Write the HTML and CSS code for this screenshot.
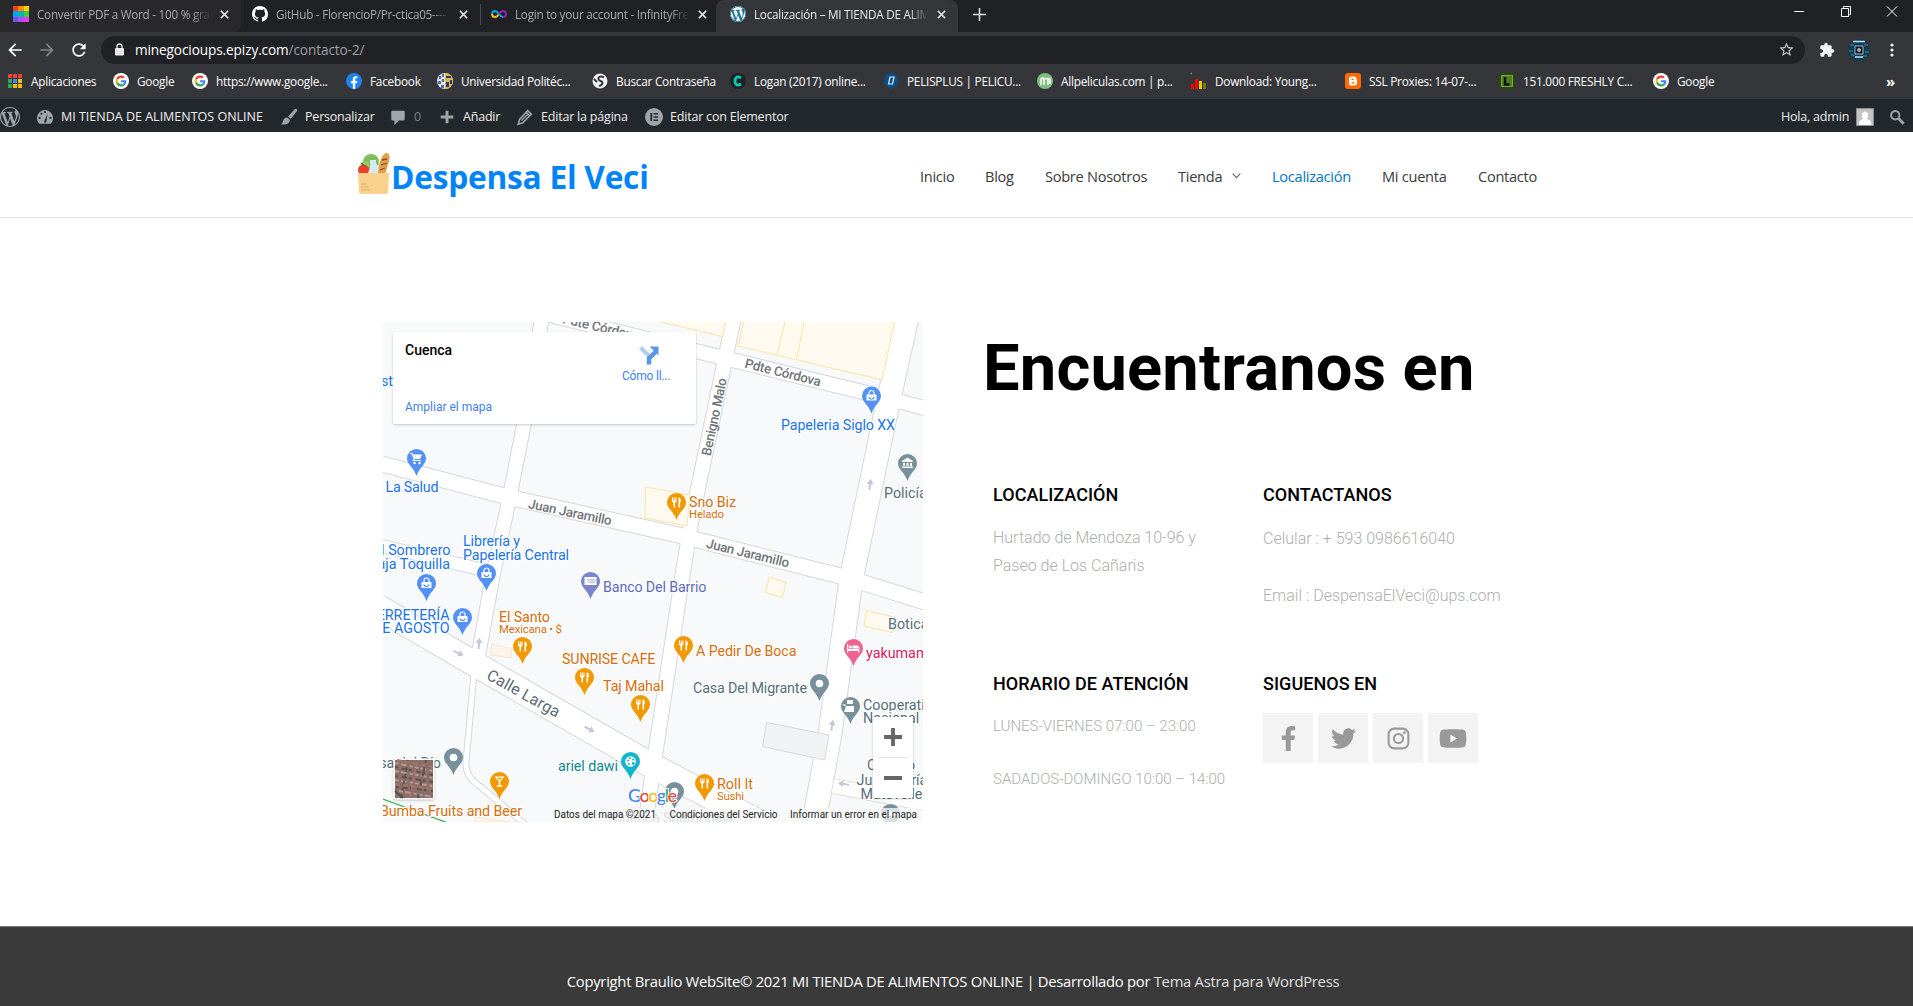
FILE: index.html
```html
<!DOCTYPE html>
<html lang="es">
<head>
<meta charset="utf-8">
<title>Localización – MI TIENDA DE ALIMENTOS ONLINE</title>
<link rel="stylesheet" href="styles.css">
</head>
<body>
<svg class="defs" width="0" height="0" aria-hidden="true">
  <symbol id="g" viewBox="-4 -4 56 56"><circle cx="24" cy="24" r="28" fill="#fff"/><g transform="translate(5 5) scale(.8)"><path fill="#ea4335" d="M24 9.5c3.54 0 6.71 1.22 9.21 3.6l6.85-6.85C35.9 2.38 30.47 0 24 0 14.62 0 6.51 5.38 2.56 13.22l7.98 6.19C12.43 13.72 17.74 9.5 24 9.5z"/><path fill="#4285f4" d="M46.98 24.55c0-1.57-.15-3.09-.38-4.55H24v9.02h12.94c-.58 2.96-2.26 5.48-4.78 7.18l7.73 6c4.51-4.18 7.09-10.36 7.09-17.65z"/><path fill="#fbbc05" d="M10.53 28.59c-.48-1.45-.76-2.99-.76-4.59s.27-3.14.76-4.59l-7.98-6.19C.92 16.46 0 20.12 0 24c0 3.88.92 7.54 2.56 10.78l7.97-6.19z"/><path fill="#34a853" d="M24 48c6.48 0 11.93-2.13 15.89-5.81l-7.73-6c-2.15 1.45-4.92 2.3-8.16 2.3-6.26 0-11.57-4.22-13.47-9.91l-7.98 6.19C6.51 42.62 14.62 48 24 48z"/></g></symbol>
  <symbol id="wp" viewBox="0 0 20 20"><path d="M20 10c0-5.51-4.49-10-10-10C4.48 0 0 4.49 0 10c0 5.52 4.48 10 10 10 5.51 0 10-4.48 10-10zM7.78 15.37L4.37 6.22c.55-.02 1.17-.08 1.17-.08.5-.06.44-1.13-.06-1.11 0 0-1.45.11-2.37.11-.18 0-.37 0-.58-.01C4.12 2.69 6.87 1.11 10 1.11c2.33 0 4.45.87 6.05 2.34-.68-.11-1.65.39-1.65 1.58 0 .74.45 1.36.9 2.1.35.61.55 1.36.55 2.46 0 1.49-1.4 5-1.4 5l-3.03-8.37c.54-.02.82-.17.82-.17.5-.05.44-1.25-.06-1.22 0 0-1.44.12-2.38.12-.87 0-2.33-.12-2.33-.12-.5-.03-.56 1.2-.06 1.22l.92.08 1.26 3.41zM17.41 10c.24-.64.74-1.87.43-4.25.7 1.29 1.05 2.71 1.05 4.25 0 3.29-1.73 6.24-4.4 7.78.97-2.59 1.94-5.2 2.92-7.78zM6.1 18.09C3.12 16.65 1.11 13.53 1.11 10c0-1.3.23-2.48.72-3.59C3.25 10.3 4.67 14.2 6.1 18.09zm4.03-6.63l2.58 6.98c-.86.29-1.76.45-2.71.45-.79 0-1.57-.11-2.29-.33.81-2.38 1.62-4.74 2.42-7.1z"/></symbol>
  <symbol id="x" viewBox="0 0 10 10"><path d="M1 1l8 8M9 1L1 9" stroke="currentColor" stroke-width="1.7" fill="none"/></symbol>
  <symbol id="arrow" viewBox="0 0 24 24"><path d="M20 11H7.83l5.59-5.59L12 4l-8 8 8 8 1.41-1.41L7.83 13H20v-2z"/></symbol>
</svg>

<div class="tabs">
  <div class="tab hover">
    <svg class="fav" viewBox="0 0 16 16"><path fill="#f53c1e" d="M0 0h5v5H0z"/><path fill="#fb8a00" d="M5 0h6v5H5z"/><path fill="#ffd000" d="M11 0h5v5h-5z"/><path fill="#00a6e8" d="M0 5h5v6H0z"/><path fill="#00b8b0" d="M5 5h6v6H5z"/><path fill="#3dc940" d="M11 5h5v6h-5z"/><path fill="#7a4df0" d="M0 11h5v5H0z"/><path fill="#b54df5" d="M5 11h6v5H5z"/><path fill="#e33ff0" d="M11 11h5v5h-5z"/></svg>
    <span class="tab-title">Convertir PDF a Word - 100 % gratis</span><svg class="close"><use href="#x"/></svg>
  </div>
  <div class="tab">
    <svg class="fav" viewBox="0 0 16 16"><path fill="#fff" d="M8 0C3.58 0 0 3.58 0 8c0 3.54 2.29 6.53 5.47 7.59.4.07.55-.17.55-.38 0-.19-.01-.82-.01-1.49-2.01.37-2.53-.49-2.69-.94-.09-.23-.48-.94-.82-1.13-.28-.15-.68-.52-.01-.53.63-.01 1.08.58 1.23.82.72 1.21 1.87.87 2.33.66.07-.52.28-.87.51-1.07-1.78-.2-3.64-.89-3.64-3.95 0-.87.31-1.59.82-2.15-.08-.2-.36-1.02.08-2.12 0 0 .67-.21 2.2.82.64-.18 1.32-.27 2-.27s1.36.09 2 .27c1.53-1.04 2.2-.82 2.2-.82.44 1.1.16 1.92.08 2.12.51.56.82 1.27.82 2.15 0 3.07-1.87 3.75-3.65 3.95.29.25.54.73.54 1.48 0 1.07-.01 1.93-.01 2.2 0 .21.15.46.55.38A8.01 8.01 0 0 0 16 8c0-4.42-3.58-8-8-8z"/></svg>
    <span class="tab-title">GitHub - FlorencioP/Pr-ctica05----</span><svg class="close"><use href="#x"/></svg>
  </div>
  <div class="tab sep">
    <svg class="fav" viewBox="0 0 16 16" fill="none" stroke-width="2"><path stroke="#f2c500" d="M8 8C6.500 10.500 5.500 11 4 11a3 3 0 0 1-3-3"/><path stroke="#00a8e8" d="M1 8a3 3 0 0 1 3-3c2 0 3 1.500 4 3s2 3 4 3"/><path stroke="#8e24aa" d="M8 8c1-1.500 2-3 4-3a3 3 0 0 1 0 6"/></svg>
    <span class="tab-title">Login to your account - InfinityFree</span><svg class="close"><use href="#x"/></svg>
  </div>
  <div class="tab active">
    <svg class="fav" viewBox="0 0 16 16"><circle cx="8" cy="8" r="8" fill="#fff"/><use href="#wp" fill="#21759b" width="16" height="16"/></svg>
    <span class="tab-title">Localización – MI TIENDA DE ALIMENTOS</span><svg class="close"><use href="#x"/></svg>
  </div>
  <svg class="plus" viewBox="0 0 13 13"><path d="M6.500 0v13M0 6.500h13" stroke="#dadce0" stroke-width="1.600"/></svg>
  <svg class="win" width="104" height="12" viewBox="0 0 104 12" fill="none" stroke="#fff"><path d="M0 6.500h10M47.500 3.500h7v8h-7zM49.500 3.500v-2h7v8h-2M93 1.500l10 10M103 1.500l-10 10"/></svg>
</div>

<div class="toolbar">
  <svg class="nav-i" fill="#fff"><use href="#arrow"/></svg>
  <svg class="nav-i flip" fill="#85868a"><use href="#arrow"/></svg>
  <svg class="nav-i" viewBox="0 0 24 24" fill="#fff"><path d="M17.650 6.350C16.200 4.900 14.210 4 12 4c-4.420 0-7.990 3.580-7.990 8s3.570 8 7.990 8c3.730 0 6.840-2.550 7.730-6h-2.080c-.82 2.330-3.040 4-5.650 4-3.310 0-6-2.690-6-6s2.690-6 6-6c1.660 0 3.140.69 4.220 1.780L13 11h7V4l-2.350 2.350z"/></svg>
  <div class="url">
    <svg width="9" height="13" viewBox="0 0 9 13"><path d="M2 6V3.500a2.500 2.500 0 0 1 5 0V6" fill="none" stroke="#e8eaed" stroke-width="1.300"/><rect y="5" width="9" height="7.500" rx="1" fill="#e8eaed"/></svg>
    <span class="addr">minegocioups.epizy.com<i>/contacto-2/</i></span>
    <svg class="star" viewBox="0 0 24 24" fill="#c8cacd"><path d="M22 9.240l-7.190-.62L12 2 9.190 8.630 2 9.240l5.460 4.730L5.820 21 12 17.270 18.180 21l-1.630-7.030L22 9.240zM12 15.400l-3.760 2.270 1-4.280-3.320-2.880 4.380-.38L12 6.100l1.710 4.040 4.380.38-3.320 2.880 1 4.280L12 15.400z"/></svg>
  </div>
  <svg class="ext" viewBox="0 0 24 24" fill="#f1f3f4"><path d="M20.500 11H19V7c0-1.100-.9-2-2-2h-4V3.500C13 2.120 11.880 1 10.500 1S8 2.120 8 3.500V5H4c-1.100 0-1.990.9-1.990 2v3.800H3.500c1.490 0 2.700 1.210 2.700 2.700s-1.210 2.700-2.700 2.700H2V20c0 1.100.9 2 2 2h3.800v-1.500c0-1.490 1.210-2.700 2.700-2.700s2.700 1.210 2.700 2.700V22H17c1.100 0 2-.9 2-2v-4h1.500c1.380 0 2.500-1.120 2.500-2.500S21.880 11 20.500 11z"/></svg>
  <svg class="ava" viewBox="0 0 22 22"><circle cx="11" cy="11" r="11" fill="#163a52"/><path d="M2 6h4M16 6h4M1 12h4M17 13h4M3 16h4M15 17h4" stroke="#2f7196" stroke-width="1.500"/><path d="M5 2.500h12M7 18h8" stroke="#bfe6f7" stroke-width="1.500"/><path d="M7 7h8v8H7z" fill="#10171f" stroke="#8fb8cc"/><circle cx="11" cy="11" r="2" fill="#aaa"/></svg>
  <svg class="dots" viewBox="0 0 4 16" fill="#f1f3f4"><circle cx="2" cy="3" r="1.600"/><circle cx="2" cy="8" r="1.600"/><circle cx="2" cy="13" r="1.600"/></svg>
</div>

<div class="bookmarks">
  <span class="bm"><svg viewBox="0 0 16 16"><path fill="#ea4335" d="M1 1h4v4H1zM6 1h4v4H6zM11 1h4v4h-4z"/><path fill="#34a853" d="M1 6h4v4H1zM1 11h4v4H1z"/><path fill="#4285f4" d="M6 6h4v4H6z"/><path fill="#fbbc05" d="M11 6h4v4h-4zM6 11h4v4H6zM11 11h4v4h-4z"/><path d="M5.500 1v14M10.500 1v14M1 5.500h14M1 10.500h14" stroke="#35363a"/></svg>Aplicaciones</span>
  <span class="bm"><svg><use href="#g"/></svg>Google</span>
  <span class="bm"><svg><use href="#g"/></svg>https://www.google...</span>
  <span class="bm"><svg viewBox="0 0 16 16"><circle cx="8" cy="8" r="8" fill="#1b84f2"/><path fill="#fff" d="M6.800 16v-5.800H4.900V8h1.900V6.300c0-2 1.200-3.100 3-3.100l1.600.1v1.900h-1c-.9 0-1.200.6-1.200 1.200V8h2.100l-.4 2.200H9.200V16z"/></svg>Facebook</span>
  <span class="bm"><svg viewBox="0 0 16 16"><circle cx="8" cy="8" r="8" fill="#dbe6f2"/><path fill="#4b6f9e" d="M2 3h2v3H2zM5 1h2v3H5zM1 8h3v3H1zM5 6h2v3H5zM4 12h3v3H4z"/><path fill="#e2b64a" d="M8 0a8 8 0 0 1 0 16z"/><path fill="#1f3d73" d="M9 3h5v2H9zM9 9h3v5H9zM13 7h2v4h-2z"/></svg>Universidad Politéc...</span>
  <span class="bm"><svg viewBox="0 0 16 16"><circle cx="8" cy="8" r="7.500" fill="#f1f3f4"/><path d="M12 4.500C8.500 2.500 5 4 7 7c1 1.300 3.500 1 3.500 3S8 13 7 12.500M2 6l3 3" fill="none" stroke="#35363a" stroke-width="2"/></svg>Buscar Contraseña</span>
  <span class="bm"><svg viewBox="0 0 16 16"><circle cx="8" cy="8" r="8" fill="#1c2226"/><path d="M11 5C7 2.500 5 5 5 8s2 5.500 6 3" fill="none" stroke="#00d1b2" stroke-width="2.800"/></svg>Logan (2017) online...</span>
  <span class="bm"><svg viewBox="0 0 16 16"><path fill="#0b4f86" d="M8 0a8 7.500 0 0 1 2 14.500L8 16l-2-1.500A7.500 7.500 0 0 1 8 0z"/><path d="M7 4h4l-1.500 7H5.500z" fill="none" stroke="#e4edf5" stroke-width="1.200"/></svg>PELISPLUS | PELICU...</span>
  <span class="bm"><svg viewBox="0 0 16 16"><circle cx="8" cy="8" r="8" fill="#7fbf7f"/><path d="M4 12V6.500c0-2 3-2 3 0V12M7 7c0-2 4-2 4 0v5M11 7c0-2 2-2 2 0v4" fill="none" stroke="#fff" stroke-width="1.500"/></svg>Allpeliculas.com | p...</span>
  <span class="bm"><svg viewBox="0 0 16 16"><path fill="#fff" d="M0 0h1v1H0z"/><path fill="#f00" d="M0 11h3v5H0zM4 6h3v10H4z"/><path fill="#f5c400" d="M8 8h3v8H8z"/><path fill="#6b7a16" d="M12 10h3v6h-3z"/></svg>Download: Young...</span>
  <span class="bm"><svg viewBox="0 0 16 16"><rect width="16" height="16" rx="3" fill="#ff6a00"/><path fill="#fff" d="M4 6a2.500 2.500 0 0 1 2.500-2.500H9A2.500 2.500 0 0 1 11.500 6c0 1 .5 1 .5 1.500V10a2.500 2.500 0 0 1-2.500 2.500h-3A2.500 2.500 0 0 1 4 10z"/><path d="M6.500 6.300h2.300M6.500 9.800h3" stroke="#ff6a00" stroke-width="1.200"/></svg>SSL Proxies: 14-07-...</span>
  <span class="bm"><svg viewBox="0 0 16 16"><path fill="#29470c" d="M0 0h16v16H0z"/><path fill="#4d7f1a" stroke="#7aa84c" d="M2.500 2.500h11v11h-11z"/><path d="M6 4v7.500h4.500" fill="none" stroke="#0a0f05" stroke-width="2.400"/></svg>151.000 FRESHLY C...</span>
  <span class="bm"><svg><use href="#g"/></svg>Google</span>
  <span class="more">»</span>
</div>

<div class="admin">
  <span class="ab"><svg class="wplogo" fill="#a0a5aa"><use href="#wp"/></svg></span>
  <span class="ab site"><svg viewBox="0 0 20 20"><path fill="#a0a5aa" d="M3.500 17.500A9 9 0 1 1 16.500 17.500z"/><path fill="#23282d" d="M9 15l4-9-1.500 9.500a1.300 1.300 0 0 1-2.500-.5z"/><g fill="#23282d"><circle cx="4" cy="11" r="1.200"/><circle cx="6" cy="6.500" r="1.200"/><circle cx="10" cy="4.500" r="1.200"/><circle cx="16" cy="11" r="1.200"/></g></svg>MI TIENDA DE ALIMENTOS ONLINE</span>
  <span class="ab"><svg viewBox="0 0 20 20" fill="#a0a5aa"><path d="M18.500 1c1 .8.800 1.800.3 2.500L12 12l-3-2.500L16 1.800C16.800.8 17.600.4 18.500 1zM8 10.500l3 2.500c0 4-4 6-10 5 2-1 2-2 2.500-4s2-3.500 4.500-3.500z"/></svg>Personalizar</span>
  <span class="ab zero"><svg viewBox="0 0 20 20" fill="#a0a5aa"><path d="M4 3h12a1.500 1.500 0 0 1 1.500 1.500v8A1.500 1.500 0 0 1 16 14h-5l-5 5v-5H4a1.500 1.500 0 0 1-1.500-1.500v-8A1.500 1.500 0 0 1 4 3z"/></svg>0</span>
  <span class="ab"><svg viewBox="0 0 20 20"><path d="M10 3v14M3 10h14" stroke="#a0a5aa" stroke-width="3.200"/></svg>Añadir</span>
  <span class="ab"><svg viewBox="0 0 20 20"><path d="M4 12.500L13 3l4 4-9.500 9.500-5 1.500z" fill="none" stroke="#a0a5aa" stroke-width="1.800"/><path d="M6 14l8-8M11 4.500l4.500 4.500" stroke="#a0a5aa" stroke-width="1.600"/></svg>Editar la página</span>
  <span class="ab"><svg class="el" viewBox="0 0 20 20"><circle cx="10" cy="10" r="10" fill="#a0a5aa"/><path fill="#23282d" d="M6 5.500h2v9H6zM9.500 5.500h5v1.700h-5zM9.500 9.200h5v1.700h-5zM9.500 12.800h5v1.700h-5z"/></svg>Editar con Elementor</span>
  <span class="hola">Hola, admin</span>
  <svg class="face" viewBox="0 0 18 18"><path fill="#c4c4c4" stroke="#8c8f94" d="M.5.500h17v17H.5z"/><path fill="#fff" d="M9 3.500a3.500 3.800 0 0 1 2 6.800c0 1.500 4 1.700 4 4.700v2H3v-2c0-3 4-3.200 4-4.700A3.500 3.800 0 0 1 9 3.500z"/></svg>
  <svg class="search" viewBox="0 0 18 18" fill="none" stroke="#a0a5aa"><circle cx="7" cy="7" r="4.700" stroke-width="2.200"/><path d="M10.500 10.500l6 6" stroke-width="3.200"/></svg>
</div>

<header class="header">
  <svg class="bag" viewBox="0 0 32 42"><circle cx="13" cy="9" r="8" fill="#7fbe5a"/><circle cx="7" cy="12" r="4" fill="#95cc6e"/><path fill="#e3a04a" d="M20 22C20 12 23 2 28 0c4 0 4 4 3 8l-4 14z"/><path d="M24 7l5-1M23 12l6-2M22 17l5-2" stroke="#84511f" stroke-width="1.300"/><path fill="#d8e8f2" d="M12 7h6v3l2 3v9h-8z"/><circle cx="5.500" cy="17" r="5.500" fill="#e9402f"/><path d="M3 10l4 3" stroke="#3c7a2d" stroke-width="1.500"/><path fill="#fbd18b" d="M0 20h31l-1 19a2 2 0 0 1-2 2H3a2 2 0 0 1-2-2z"/><path d="M3 31h6M3 34h8M3 37h9" stroke="#dfae69" stroke-width="1"/></svg>
  <span class="brand">Despensa El Veci</span>
  <nav class="menu">
    <a>Inicio</a><a>Blog</a><a>Sobre Nosotros</a><a>Tienda <svg width="9" height="6" viewBox="0 0 9 6"><path d="M.7.700l3.800 4 3.800-4" fill="none" stroke="#666" stroke-width="1.100"/></svg></a><a class="on">Localización</a><a>Mi cuenta</a><a>Contacto</a>
  </nav>
</header>

<main class="main">
  <svg class="map" width="540" height="500" viewBox="0 0 540 500">
    <defs>
      <path id="pin" d="M0-9.500a9.500 9.500 0 0 1 9.500 9.500c0 6-6.500 8.500-9.500 17.500C-3 8.500-9.500 6-9.500 0A9.500 9.500 0 0 1 0-9.500z"/>
      <path id="fork" d="M-4.500-5v3.500c0 1 1 1.500 1.500 1.500v5h1.500V0c.5 0 1.500-.5 1.500-1.500V-5h-1v3h-.7v-3h-1v3h-.7v-3zM2-5c2 0 2.500 2 2.500 4.500H3.600V5H2z" fill="#fff"/>
      <g id="shop"><path d="M-5-1.500h10v6H-5z" fill="#fff"/><path d="M-2.500-1.500V-3a2.500 2.500 0 0 1 5 0v1.500" fill="none" stroke="#fff" stroke-width="1.200"/><path d="M-2.500 1a2.500 2 0 0 0 5 0" fill="none" stroke="#5491f5" stroke-width="1.200"/></g>
      <path id="dir" d="M0-6l3.500 5H1v6h-2v-6h-2.500z" fill="#c3c7d6"/>
      <g id="roads" fill="none">
        <path d="M-5 141L125 175L295 213L465 256L545 281" stroke-width="15"/>
        <path d="M159-5L141 102L126 178L110 253L95 335" stroke-width="13.500"/>
        <path d="M351-5L341 43L309 195L300 250L271 440L262 505" stroke-width="14"/>
        <path d="M524-5L503 90L468 258L447 412L430 505" stroke-width="23"/>
        <path d="M155-10L345 37L500 75L545 87" stroke-width="14"/>
        <path d="M-5 285L90 341L266 442L385 505" stroke-width="24.500"/>
        <path d="M-5 223L105 249" stroke-width="12"/>
        <path d="M450 464L545 482" stroke-width="14"/>
        <path d="M92 340L83 440Q82 455 98 465L145 505" stroke-width="5"/>
      </g>
    </defs>
    <rect width="540" height="500" fill="#f8f9fb"/>
    <g fill="none" stroke="#d5d8de">
      <path stroke-width="17" d="M-5 141L125 175L295 213L465 256L545 281"/><path stroke-width="15.500" d="M159-5L141 102L126 178L110 253L95 335"/><path stroke-width="16" d="M351-5L341 43L309 195L300 250L271 440L262 505"/><path stroke-width="25" d="M524-5L503 90L468 258L447 412L430 505"/><path stroke-width="16" d="M155-10L345 37L500 75L545 87"/><path stroke-width="26.500" d="M-5 285L90 341L266 442L385 505"/><path stroke-width="14" d="M-5 223L105 249"/><path stroke-width="16" d="M450 464L545 482"/><path stroke-width="7" d="M92 340L83 440Q82 455 98 465L145 505"/>
    </g>
    <use href="#roads" stroke="#fff"/>
    <g fill="#fffaf0" stroke="#fde3a4"><path d="M361-2L355 24L499 58L512-2zM402 0L394 32.700M421 0L413.500 37.500M270-2L339.700 14.700L343-2z"/><path d="M262.500 165L307 173L304 204L262 196zM386.500 255L403 260.500L399.500 275.500L382.500 270.500zM483.500 288.500L512.500 295.500L509.500 310.500L481 304.500z"/><path d="M109 322L129 327L128 336L107 333zM93 495L127 500H91z" fill="#fff4ea" stroke="#fde2cc"/></g>
    <path d="M383.500 400.500L446 413L441.500 438L379.500 424.500z" fill="#f1f2f4" stroke="#d5d8de"/>
    <path d="M0 477L65 501" stroke="#41b457" stroke-width="1.300"/>
    <g class="dirs"><use href="#dir" transform="translate(487 163) rotate(8)"/><use href="#dir" transform="translate(96 322) rotate(5)"/><use href="#dir" transform="translate(75 331) rotate(115)"/><use href="#dir" transform="translate(206 407) rotate(117)"/><use href="#dir" transform="translate(449 404) rotate(8)"/><use href="#dir" transform="translate(461 462) rotate(-80)"/></g>

    <g class="street">
      <text transform="translate(179 1) rotate(13)" textLength="78">Pdte Córdova</text>
      <text transform="translate(361 45.500) rotate(14)" textLength="78">Pdte Córdova</text>
      <text transform="translate(327.500 134.500) rotate(-78)" textLength="79">Benigno Malo</text>
      <text transform="translate(144.500 186) rotate(11.800)" textLength="85">Juan Jaramillo</text>
      <text transform="translate(322.500 225.500) rotate(13.700)" textLength="85">Juan Jaramillo</text>
      <text class="big" transform="translate(102.500 356.500) rotate(29)" textLength="81">Calle Larga</text>
    </g>

    <g fill="#5491f5"><use href="#pin" x="33.500" y="136.500"/><use href="#pin" x="488.500" y="74"/><use href="#pin" x="103.500" y="251.500"/><use href="#pin" x="43.500" y="261.500"/><use href="#pin" x="79.500" y="295.500"/></g>
    <g fill="#f29900"><use href="#pin" x="293.500" y="180.500"/><use href="#pin" x="139.500" y="324.500"/><use href="#pin" x="201.500" y="355.500"/><use href="#pin" x="257.500" y="382.500"/><use href="#pin" x="116.500" y="459.500"/><use href="#pin" x="300.500" y="323.500"/><use href="#pin" x="321.500" y="461.500"/></g>
    <g fill="#78909c"><use href="#pin" x="524.500" y="141.500"/><use href="#pin" x="70.500" y="435.500"/><use href="#pin" x="436.500" y="361.500"/><use href="#pin" x="467.500" y="384.500"/><use href="#pin" x="291.500" y="469.500"/><use href="#pin" x="507.500" y="491.500"/></g>
    <use href="#pin" x="207.500" y="259.500" fill="#7986cb"/><use href="#pin" x="247.500" y="439.500" fill="#12b5cb"/><use href="#pin" x="470.500" y="326.500" fill="#f06292"/>
    <use href="#shop" x="488.500" y="74"/><use href="#shop" x="103.500" y="251.500"/><use href="#shop" x="43.500" y="261.500"/><use href="#shop" x="79.500" y="295.500"/>
    <use href="#fork" x="293.500" y="180.500"/><use href="#fork" x="139.500" y="324.500"/><use href="#fork" x="201.500" y="355.500"/><use href="#fork" x="257.500" y="382.500"/><use href="#fork" x="300.500" y="323.500"/><use href="#fork" x="321.500" y="461.500"/>
    <g fill="#fff"><circle cx="70.500" cy="435.500" r="3.800"/><circle cx="436.500" cy="361.500" r="3.800"/><circle cx="291.500" cy="469.500" r="3.800"/>
      <path d="M27 131h2.500l.8 1.500H39l-2 4.500h-5.500l-.5 1h7v1h-8.500l1-2.500-2-4.500H27z"/><circle cx="31.500" cy="141" r="1.200"/><circle cx="36.500" cy="141" r="1.200"/>
      <path d="M519 139l5.500-3.500 5.500 3.500v1h-11zM520 141h2v3h-2zM523.500 141h2v3h-2zM527 141h2v3h-2zM519 144.500h11v1.500h-11z"/>
      <path d="M201.500 255h12v8h-12z"/><path d="M464 322h1.300v5h11v3.500H475V329h-9.700v1.500H464zM469.500 323.500h5l2 2v1h-7z"/><circle cx="467.500" cy="325" r="1.500"/>
      <path d="M464 378h6v4h-6zM463 384h8v6h-10zM459 383l3-1 1 2z"/><circle cx="247.500" cy="439.500" r="5.300"/>
      <path d="M111.500 454.500h10l-4.200 5v4h2.200v1.200h-6v-1.200h2.200v-4z"/><path d="M501 492l6-4 6 4v2h-12z"/></g>
    <path d="M114 455.700h5l-1.300 1.800h-2.400z" fill="#f29900"/>
    <g fill="#12b5cb"><circle cx="245" cy="438.500" r="1"/><circle cx="247" cy="436.300" r="1"/><circle cx="250" cy="437.500" r="1"/><circle cx="246" cy="442" r="1"/><circle cx="250.300" cy="441.500" r="1.400"/></g>
    <text x="203.500" y="261" font-size="5" fill="#7986cb">100</text>

    <g class="poi blue"><text x="398" y="107.500" textLength="114">Papeleria Siglo XX</text><text x="2.500" y="169.500" textLength="53">La Salud</text><text class="end" x="10" y="63.500">st</text><text x="80" y="223.500" textLength="57">Librería y</text><text x="80" y="237.500" textLength="106">Papelería Central</text><text class="end" x="67.500" y="232.500">l Sombrero</text><text class="end" x="67" y="246.500">aja Toquilla</text><text class="end" x="66.500" y="297.500">ERRETERÍA</text><text class="end" x="66.500" y="311">E AGOSTO</text></g>
    <g class="poi orange"><text x="306" y="184.500" textLength="47">Sno Biz</text><text class="sm" x="306" y="196" textLength="35">Helado</text><text x="116" y="299.500" textLength="51">El Santo</text><text class="sm" x="116" y="311" textLength="63">Mexicana • $</text><text x="179" y="341.500" textLength="93.500">SUNRISE CAFE</text><text x="220" y="368.500" textLength="61">Taj Mahal</text><text x="313" y="333.500" textLength="100.500">A Pedir De Boca</text><text class="end" x="139" y="493.500" textLength="142">Bumba Fruits and Beer</text><text x="334" y="466.500" textLength="36">Roll It</text><text class="sm" x="334" y="477.500" textLength="27">Sushi</text></g>
    <g class="poi slate"><text x="501" y="175.500">Policía</text><text x="310" y="370.500" textLength="114">Casa Del Migrante</text><text x="505" y="306.500">Botica</text><text x="480" y="387.500">Cooperativa</text><text x="480" y="401">Nacional J</text><text x="484" y="448">Colegio</text><text x="473.500" y="462.500">Julio María</text><text x="477.500" y="476.500">Matovelle -</text><text class="end" x="58" y="445.500">sa del Río</text><text x="230" y="501" textLength="120" opacity=".7">Cuenca Shambhala</text></g>
    <g class="poi"><text x="220" y="269.500" textLength="103.500" fill="#5c6bc0">Banco Del Barrio</text><text x="483" y="336" fill="#d81b60">yakumama</text><text x="175" y="449" textLength="60" fill="#0b8793">ariel dawi</text></g>

    <rect class="shadow" x="10" y="10" width="303" height="92" rx="2" fill="#fff"/>
    <text x="22" y="33" class="place">Cuenca</text>
    <text x="22" y="89" class="link" textLength="87">Ampliar el mapa</text>
    <text x="239" y="58" class="link" textLength="48.500">Cómo ll...</text>
    <path d="M257.500 25.500l9 9" stroke="#b3cef6" stroke-width="4"/><path d="M266 42.500v-6l7-7" stroke="#5a96e6" stroke-width="4.500" fill="none"/><path d="M266.500 24.500h9v9z" fill="#5a96e6"/>

    <g class="shadow"><rect x="10.500" y="436.500" width="41" height="41" rx="2" fill="#fff"/></g>
    <rect x="12" y="438" width="38" height="38" fill="#8a6f69"/>
    <g stroke-width="2" fill="none"><path stroke="#b8988f" stroke-dasharray="4 2 6 3 3 2" d="M12 441l38 8M12 449l38 7M12 458l38 6M16 469l34 6"/><path stroke="#62524e" stroke-dasharray="3 4 5 2" d="M12 445l38 8M12 454l38 6M13 465l37 4M25 438l-7 38M43 438l-8 38"/><path stroke="#a3766b" stroke-dasharray="5 3" d="M12 462l38 5M14 438l36 7M34 440l-7 36"/><path stroke="#46534b" d="M12 469l8 7"/></g>
    <g class="shadow"><rect x="490" y="395" width="40" height="81" rx="2" fill="#fff"/></g>
    <path d="M510 406v18M501 415h18M501 456h18" stroke="#666" stroke-width="3.800"/><path d="M495 435.500h30" stroke="#e6e6e6"/>
    <text class="glogo" x="245" y="479.500" textLength="49"><tspan fill="#4285f4">G</tspan><tspan fill="#ea4335">o</tspan><tspan fill="#fbbc05">o</tspan><tspan fill="#4285f4">g</tspan><tspan fill="#34a853">l</tspan><tspan fill="#ea4335">e</tspan></text>
    <rect x="167" y="486" width="373" height="14" fill="#f8f8f8" opacity=".75"/>
    <g class="attr"><text x="171" y="496" textLength="102">Datos del mapa ©2021</text><text x="286.500" y="496" textLength="108">Condiciones del Servicio</text><text x="407" y="496" textLength="127">Informar un error en el mapa</text></g>
  </svg>

  <section class="info">
    <h1>Encuentranos en</h1>
    <div class="cols">
      <div class="cell"><h2>LOCALIZACIÓN</h2><p class="l28">Hurtado de Mendoza 10-96 y<br>Paseo de Los Cañaris</p></div>
      <div class="cell"><h2>CONTACTANOS</h2><p class="l57">Celular : + 593 0986616040<br>Email : DespensaElVeci@ups.com</p></div>
      <div class="cell"><h2>HORARIO DE ATENCIÓN</h2><p class="l53">LUNES-VIERNES 07:00 – 23:00<br>SADADOS-DOMINGO 10:00 – 14:00</p></div>
      <div class="cell"><h2>SIGUENOS EN</h2>
        <div class="social">
          <span><svg viewBox="0 0 320 512"><path d="M279.140 288l14.220-92.660h-88.910v-60.130c0-25.350 12.420-50.060 52.240-50.060h40.420V6.260S260.430 0 225.360 0c-73.220 0-121.080 44.380-121.080 124.720v70.620H22.890V288h81.390v224h100.170V288z"/></svg></span>
          <span><svg viewBox="0 0 512 512"><path d="M459.370 151.716c.325 4.548.325 9.097.325 13.645 0 138.720-105.583 298.558-298.558 298.558-59.452 0-114.680-17.219-161.137-47.106 8.447.974 16.568 1.299 25.340 1.299 49.055 0 94.213-16.568 130.274-44.832-46.132-.975-84.792-31.188-98.112-72.772 6.498.974 12.995 1.624 19.818 1.624 9.421 0 18.843-1.300 27.614-3.573-48.081-9.747-84.143-51.980-84.143-102.985v-1.299c13.969 7.797 30.214 12.670 47.431 13.319-28.264-18.843-46.781-51.005-46.781-87.391 0-19.492 5.197-37.360 14.294-52.954 51.655 63.675 129.300 105.258 216.365 109.807-1.624-7.797-2.599-15.918-2.599-24.040 0-57.828 46.782-104.934 104.934-104.934 30.213 0 57.502 12.670 76.670 33.137 23.715-4.548 46.456-13.320 66.599-25.340-7.798 24.366-24.366 44.833-46.132 57.827 21.117-2.273 41.584-8.122 60.426-16.243-14.292 20.791-32.161 39.308-52.628 54.253z"/></svg></span>
          <span><svg viewBox="0 0 512 512"><rect x="54" y="54" width="404" height="404" rx="112" fill="none" stroke="#999" stroke-width="42"/><circle cx="256" cy="256" r="94" fill="none" stroke="#999" stroke-width="42"/><circle cx="376" cy="136" r="27"/></svg></span>
          <span><svg class="yt" viewBox="0 0 576 512"><path d="M549.655 124.083c-6.281-23.650-24.787-42.276-48.284-48.597C458.781 64 288 64 288 64S117.220 64 74.629 75.486c-23.497 6.322-42.003 24.947-48.284 48.597-11.412 42.867-11.412 132.305-11.412 132.305s0 89.438 11.412 132.305c6.281 23.650 24.787 41.500 48.284 47.821C117.220 448 288 448 288 448s170.780 0 213.371-11.486c23.497-6.321 42.003-24.171 48.284-47.821 11.412-42.867 11.412-132.305 11.412-132.305s0-89.438-11.412-132.305zm-317.510 213.508V175.185l142.739 81.205-142.739 81.201z"/></svg></span>
        </div>
      </div>
    </div>
  </section>
</main>

<footer class="footer">Copyright Braulio WebSite© 2021 MI TIENDA DE ALIMENTOS ONLINE | Desarrollado por <a>Tema Astra para WordPress</a></footer>
</body>
</html>
```
FILE: styles.css
```css
* { box-sizing: border-box; }
html, body { margin: 0; height: 1006px; overflow: hidden; }
body { font-family: "Open Sans", "Noto Sans", sans-serif; background: #fff; color: #3a3a3a; display: flex; flex-direction: column; }
svg { display: block; flex: none; }
.defs { position: absolute; }

/* tab strip */
.tabs { height: 32px; background: #202124; display: grid; grid-template-columns: 241px 239px 236px 242px 1fr 119px; }
.tab { display: flex; align-items: center; height: 32px; padding: 0 11px 4px; color: #a8aaae; font-size: 11.700px; overflow: hidden; }
.tab.hover { background: #29292c; padding-left: 13px; border-radius: 0 0 8px 0; }
.tab.sep { border-left: 1px solid #4a4c50; height: 21px; margin-top: 4px; padding-bottom: 1px; padding-left: 10px; }
.tab.active { background: #35363a; color: #e8eaed; padding-left: 14px; border-radius: 8px 8px 0 0; }
.fav { width: 16px; height: 16px; margin-right: 8px; }
.tab-title { width: 176px; flex: none; white-space: nowrap; overflow: hidden; letter-spacing: -.25px; mask-image: linear-gradient(90deg, #000 88%, transparent 99%); }
.close { width: 9px; height: 9px; margin-left: 7px; color: #e0e1e3; }
.plus { width: 13px; height: 13px; margin: 8px 0 0 15px; }
.win { margin-top: 5px; }

/* address row */
.toolbar { height: 33px; background: #35363a; display: flex; align-items: center; padding-top: 2px; }
.nav-i { width: 20px; height: 20px; margin-left: 5px; margin-right: 7px; }
.flip { transform: scaleX(-1); }
.url { width: 1704px; height: 28px; margin-left: 5px; border-radius: 14px; background: #202124; display: flex; align-items: center; padding: 0 10px 0 14px; }
.addr { margin-left: 11px; flex: 1; color: #fff; font-size: 13.600px; letter-spacing: -.1px; padding-bottom: 1px; }
.addr i { font-style: normal; color: #9aa0a6; }
.star { width: 17px; height: 17px; }
.ext { width: 16px; height: 16px; margin-left: 14px; }
.ava { width: 22px; height: 22px; margin-left: 13px; }
.dots { width: 4px; height: 16px; margin-left: 20px; }

/* bookmarks */
.bookmarks { height: 34px; background: #35363a; color: #fff; font-size: 11.800px; letter-spacing: -.24px; display: grid; align-items: center; padding: 0 0 3px 7px; grid-template-columns: 106px 79px 154px 91px 155px 138px 153px 154px 154px 154px 154px 154px 233px 1fr; white-space: nowrap; }
.bm { display: flex; align-items: center; gap: 8px; }
.bm svg { width: 16px; height: 16px; }
.more { font-size: 15px; font-weight: 700; }

/* WordPress admin bar */
.admin { height: 33px; background: #23282d; color: #eee; font-size: 12.500px; letter-spacing: -.2px; display: grid; grid-template-columns: 36px 244px 109px 49px 78px 128px 1137px 75px 33px 1fr; align-items: center; padding-top: 2px; white-space: nowrap; }
.ab { display: flex; align-items: center; gap: 7px; }
.ab svg { width: 18px; height: 18px; }
.ab svg.wplogo { width: 20px; height: 20px; }
.ab svg.el { margin-left: 1px; }
.site { letter-spacing: 0; }
.zero { color: #7b8085; }
.face { width: 18px; height: 18px; }
.search { width: 16px; height: 16px; }

/* site header */
.header { height: 86px; border-bottom: 1px solid #e6e6e6; display: flex; align-items: center; padding: 2px 0 0 358px; }
.bag { width: 32px; height: 42px; margin-top: -4px; }
.brand { width: 529px; margin-left: 1px; color: #0084f7; font: 700 31.700px "Open Sans", sans-serif; letter-spacing: -.25px; padding-top: 1px; }
.menu { display: grid; grid-template-columns: 65px 60px 133px 94px 110px 96px 80px; font-size: 14.600px; letter-spacing: -.28px; white-space: nowrap; }
.menu a { display: flex; align-items: center; gap: 10px; }
.menu .on { color: #0274be; }

/* content */
.main { height: 708px; flex: none; display: flex; padding: 104px 0 0 383px; font-family: Roboto, sans-serif; }
.map { overflow: hidden; }
.street text { font: 500 13.300px Roboto, sans-serif; fill: #70757a; }
.street .big { font-size: 16px; font-weight: 400; fill: #5c6b75; }
.map text { font-family: Roboto, sans-serif; }
.poi text { font-size: 14.300px; paint-order: stroke; stroke: #fff; stroke-width: 2px; stroke-linejoin: round; }
.poi .sm { font-size: 11.500px; }
.poi .end { text-anchor: end; }
.blue { fill: #1a73e8; }
.orange { fill: #d56e0c; }
.slate { fill: #546e7a; }
.place { font-size: 14px; font-weight: 500; }
.link { font-size: 12px; fill: #427fed; }
.shadow { filter: drop-shadow(0 1px 1px rgba(0, 0, 0, .22)); }
.attr text { font-size: 10px; fill: #222; }
.map .glogo { font: 500 18px Lato, sans-serif; paint-order: stroke; stroke: #fff; stroke-width: 2px; }

.info { padding-left: 60px; }
h1 { margin: 11px 0 0; font-size: 65px; line-height: 70px; font-weight: 700; color: #000; letter-spacing: .2px; white-space: nowrap; }
.cols { display: grid; grid-template-columns: 270px 300px; grid-template-rows: 189px auto; padding: 80px 0 0 10px; }
h2 { margin: 0; font-size: 18px; line-height: 24px; font-weight: 500; color: #000; letter-spacing: .04px; }
p { margin: 0; font-size: 16px; font-weight: 300; color: #aeaeae; white-space: nowrap; }
.l28 { line-height: 28px; padding-top: 17px; }
.l57 { line-height: 57px; padding-top: 3px; }
.l53 { line-height: 53px; padding-top: 4px; font-size: 15px; }
.social { display: flex; gap: 5px; padding-top: 17px; }
.social span { width: 50px; height: 50px; background: #f3f3f3; display: grid; place-items: center; }
.social svg { height: 25px; width: 25px; fill: #999; }
.social .yt { width: 28px; }

.footer { height: 80px; flex: none; background: #3a3a3a; border-top: 1px solid #7a7a7a; text-align: center; color: #fff; font-size: 14.800px; line-height: 20px; letter-spacing: -.28px; padding: 44px 7px 0 0; }
.footer a { color: #e0e0e0; }
```
